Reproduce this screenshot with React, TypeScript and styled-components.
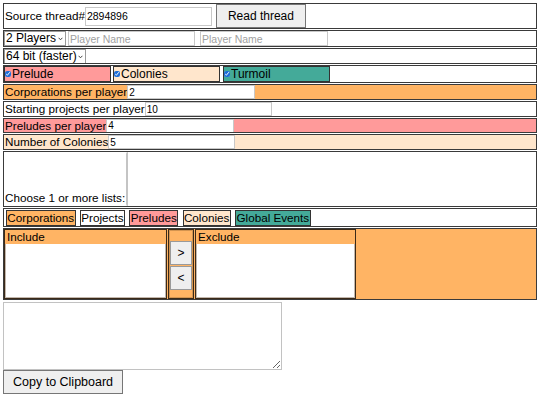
import React from "react";
import styled, { createGlobalStyle } from "styled-components";

const ORANGE = "#ffb464";
const PINK = "#ff9a9a";
const PEACH = "#ffe6cc";
const TEAL = "#44aa99";

const Global = createGlobalStyle`
  html, body { background: #fff; }
  body {
    margin: 3px;
    font-family: "Liberation Sans", Arial, sans-serif;
    font-size: 11.7px;
    color: #000;
  }
  * { box-sizing: border-box; }
`;

const Page = styled.div`
  display: flex;
  flex-direction: column;
  width: 534px;
`;

const Row = styled.div<{ $bg?: string; $h: number; $align?: string; $pad?: number }>`
  display: flex;
  align-items: ${(p) => p.$align || "center"};
  height: ${(p) => p.$h}px;
  background: ${(p) => p.$bg || "#fff"};
  border: 1px solid #3a3a3a;
  margin-bottom: 1px;
  padding: 0 ${(p) => p.$pad ?? 1}px;
  overflow: hidden;
  white-space: nowrap;
`;

const Label = styled.span`
  font-size: 11.7px;
  line-height: 1;
`;

const TextInput = styled.input<{ $w?: number; $h?: number; $fs?: number }>`
  width: ${(p) => p.$w ?? 127}px;
  height: ${(p) => p.$h ?? 14}px;
  font-family: "Liberation Sans", Arial, sans-serif;
  font-size: ${(p) => p.$fs ?? 10.5}px;
  padding: 0 1px;
  margin: 0;
  border: 1px solid #c8c8c8;
  background: #fff;
  color: #000;
  outline: none;
  &::placeholder { color: #a0a0a0; }
`;

const Gap = styled.span<{ $w: number }>`
  display: inline-block;
  width: ${(p) => p.$w}px;
  flex: none;
`;

const PlainButton = styled.button<{ $fs?: number; $h?: number; $px?: number }>`
  font-family: "Liberation Sans", Arial, sans-serif;
  font-size: ${(p) => p.$fs ?? 12}px;
  height: ${(p) => p.$h ?? 24}px;
  padding: 0 ${(p) => p.$px ?? 11}px;
  margin: 0;
  background: #efefef;
  border: 1px solid #767676;
  color: #000;
  line-height: 1;
  white-space: nowrap;
`;

/* dropdown with a small chevron drawn on the right */
const SelectBox = styled.span`
  position: relative;
  display: inline-flex;
  height: 15px;
  border: 1px solid #9a9a9a;
  background: #fff;
`;

const Select = styled.select`
  appearance: none;
  -webkit-appearance: none;
  font-family: "Liberation Sans", Arial, sans-serif;
  font-size: 12px;
  height: 13px;
  line-height: 13px;
  padding: 0 8px 0 1px;
  margin: 0;
  border: none;
  background: transparent;
  color: #000;
  outline: none;
`;

const Chevron = styled.svg`
  position: absolute;
  right: 2px;
  top: 5px;
  width: 5px;
  height: 4px;
  pointer-events: none;
`;

const Dropdown = ({ value, options }: { value: string; options: [string, string][] }) => (
  <SelectBox>
    <Select defaultValue={value}>
      {options.map(([v, t]) => (
        <option key={v} value={v}>
          {t}
        </option>
      ))}
    </Select>
    <Chevron viewBox="0 0 5 4">
      <path d="M0.6 0.8 L2.5 2.8 L4.4 0.8" fill="none" stroke="#444" strokeWidth="1" />
    </Chevron>
  </SelectBox>
);

const Toggle = styled.label<{ $bg: string; $ml?: number }>`
  display: flex;
  align-items: center;
  width: 107px;
  height: 16px;
  margin-right: 2px;
  margin-left: ${(p) => p.$ml ?? 0}px;
  background: ${(p) => p.$bg};
  border: 1px solid #333;
  font-size: 12px;
`;

const Tick = styled.input`
  width: 6px;
  height: 6px;
  margin: 0 1px 0 0;
  accent-color: #1e6ed8;
  flex: none;
`;

const Lists = styled.select`
  flex: 1;
  height: 54px;
  margin: 0 0 0 1px;
  border: none;
  border-left: 2px solid #c4c4c4;
  background: #fff;
  outline: none;
`;

const TagRow = styled.div`
  display: flex;
  align-items: center;
  gap: 4.5px;
  padding-left: 1px;
`;

const Tag = styled.span<{ $bg: string }>`
  display: inline-block;
  height: 16px;
  line-height: 14px;
  padding: 0 0.3px;
  background: ${(p) => p.$bg};
  border: 1px solid #333;
  font-size: 11.7px;
`;

const Picker = styled.div`
  display: flex;
  align-items: stretch;
  height: 100%;
  padding: 0;
  gap: 1px;
`;

const ListBox = styled.div<{ $w: number }>`
  display: flex;
  flex-direction: column;
  width: ${(p) => p.$w}px;
  border: 1px solid #3b2a18;
  box-shadow: inset 0 0 0 1px rgba(80, 50, 20, 0.35);
  background: #fff;
`;

const ListHead = styled.div`
  height: 14px;
  line-height: 14px;
  padding-left: 2px;
  background: ${ORANGE};
  font-size: 11.7px;
`;

const Movers = styled.div`
  display: flex;
  flex-direction: column;
  align-items: center;
  width: 26px;
  padding-top: 11px;
  gap: 1px;
  border: 1px solid #3b2a18;
  box-shadow: inset 0 0 0 1px rgba(80, 50, 20, 0.25);
  background: ${ORANGE};
`;

const MoveButton = styled(PlainButton)`
  width: 22px;
  height: 24px;
  padding: 0;
  font-size: 12px;
  border-color: #9a9a9a;
`;

const Output = styled.textarea`
  display: block;
  width: 279px;
  height: 68px;
  margin: 1px 0 0 0;
  border: 1px solid #c2c2c2;
  resize: vertical;
  font-family: "Liberation Mono", monospace;
  font-size: 12px;
`;

const Footer = styled.div`
  display: flex;
`;

export default function App() {
  return (
    <>
      <Global />
      <Page>
        <Row $h={26}>
          <Label>Source thread#</Label>
          <TextInput $w={127} $h={19} defaultValue="2894896" />
          <Gap $w={4} />
          <PlainButton $fs={12} $h={24} $px={11}>
            Read thread
          </PlainButton>
        </Row>

        <Row $h={17} $pad={0}>
          <Dropdown
            value="2"
            options={[
              ["1", "1 Player"],
              ["2", "2 Players"],
              ["3", "3 Players"],
              ["4", "4 Players"],
              ["5", "5 Players"],
            ]}
          />
          <Gap $w={2} />
          <TextInput $w={127} $h={15} $fs={10.5} placeholder="Player Name" />
          <Gap $w={5} />
          <TextInput $w={128} $h={15} $fs={10.5} placeholder="Player Name" />
        </Row>

        <Row $h={16} $pad={0}>
          <Dropdown
            value="64"
            options={[
              ["32", "32 bit"],
              ["64", "64 bit (faster)"],
            ]}
          />
        </Row>

        <Row $h={18} $pad={0}>
          <Toggle $bg={PINK}>
            <Tick type="checkbox" defaultChecked />
            Prelude
          </Toggle>
          <Toggle $bg={PEACH}>
            <Tick type="checkbox" defaultChecked />
            Colonies
          </Toggle>
          <Toggle $bg={TEAL} $ml={1}>
            <Tick type="checkbox" defaultChecked />
            Turmoil
          </Toggle>
        </Row>

        <Row $h={16} $bg={ORANGE}>
          <Label>Corporations per player</Label>
          <TextInput $w={128} $h={14} $fs={10} defaultValue="2" />
        </Row>

        <Row $h={16}>
          <Label>Starting projects per player</Label>
          <TextInput $w={127} $h={14} $fs={10} defaultValue="10" />
        </Row>

        <Row $h={15} $bg={PINK}>
          <Label>Preludes per player</Label>
          <TextInput $w={128} $h={14} $fs={10} defaultValue="4" />
        </Row>

        <Row $h={16} $bg={PEACH}>
          <Label>Number of Colonies</Label>
          <TextInput $w={127} $h={14} $fs={10} defaultValue="5" />
        </Row>

        <Row $h={56} $align="flex-end">
          <Label style={{ paddingBottom: 2 }}>Choose 1 or more lists:</Label>
          <Lists multiple />
        </Row>

        <Row $h={19}>
          <TagRow>
            <Tag $bg={ORANGE}>Corporations</Tag>
            <Tag $bg="#fff">Projects</Tag>
            <Tag $bg={PINK}>Preludes</Tag>
            <Tag $bg={PEACH}>Colonies</Tag>
            <Tag $bg={TEAL}>Global Events</Tag>
          </TagRow>
        </Row>

        <Row $h={72} $bg={ORANGE} $align="stretch" $pad={0}>
          <Picker>
            <ListBox $w={163}>
              <ListHead>Include</ListHead>
            </ListBox>
            <Movers>
              <MoveButton>&gt;</MoveButton>
              <MoveButton>&lt;</MoveButton>
            </Movers>
            <ListBox $w={161}>
              <ListHead>Exclude</ListHead>
            </ListBox>
          </Picker>
        </Row>

        <Output />
        <Footer>
          <PlainButton $fs={12.5} $h={24} $px={9}>
            Copy to Clipboard
          </PlainButton>
        </Footer>
      </Page>
    </>
  );
}
